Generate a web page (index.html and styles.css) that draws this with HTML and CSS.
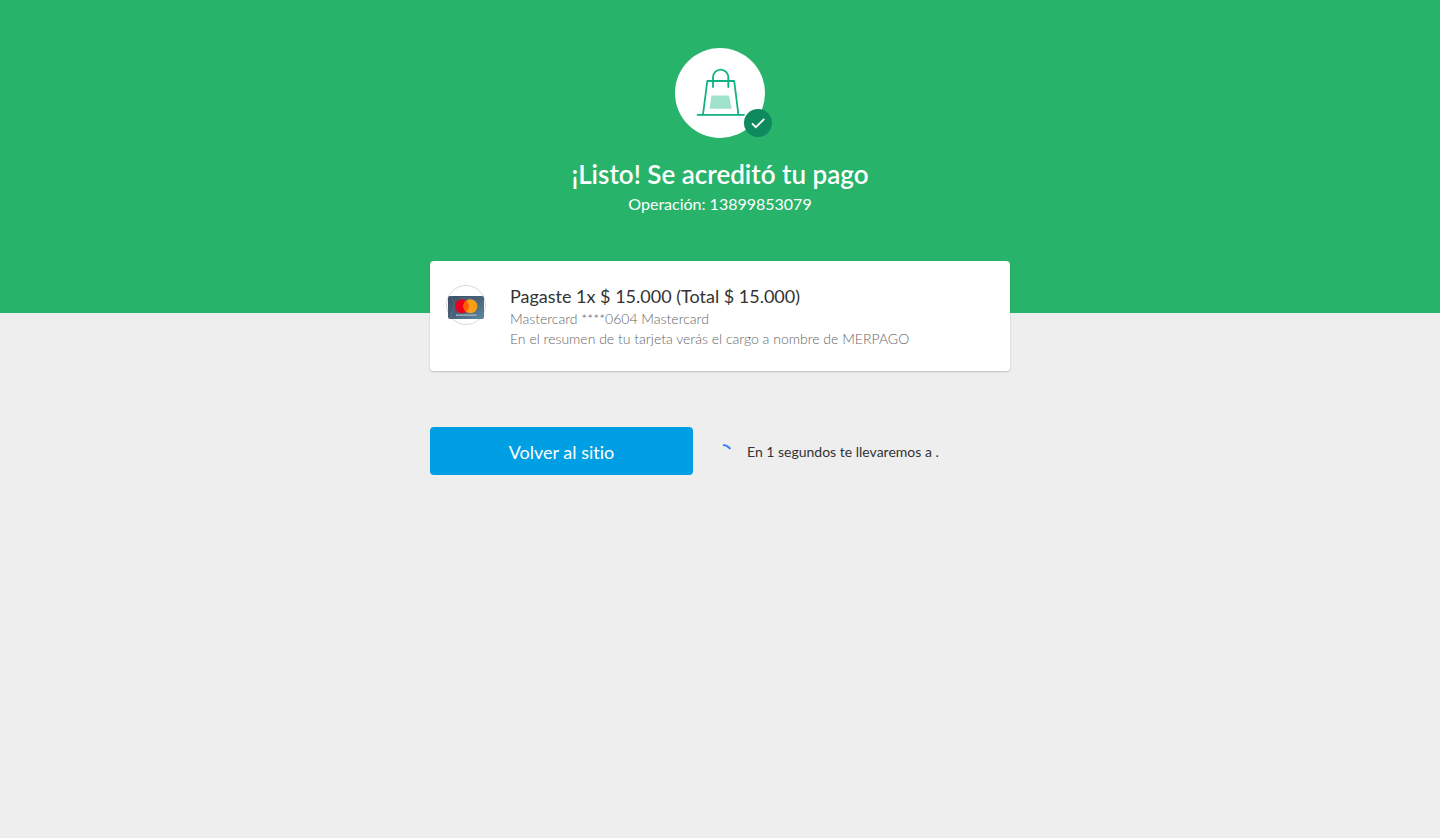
FILE: index.html
```html
<!DOCTYPE html>
<html lang="es">
<head>
<meta charset="utf-8">
<meta name="viewport" content="width=device-width, initial-scale=1">
<title>¡Listo! Se acreditó tu pago</title>
<link rel="stylesheet" href="styles.css">
</head>
<body>
<header class="hero">
  <div class="status">
    <svg class="status-bag" viewBox="0 0 90 90" fill="none" aria-hidden="true">
      <path d="M36.5 47.5h17.5l2.7 13.2H34.5z" fill="#9fe2cb"/>
      <g stroke="#12b083" stroke-width="1.8" stroke-linecap="round" stroke-linejoin="round">
        <path d="M22.500 66.800H69"/>
        <path d="M28 66.500L32.300 33h26.900L63.400 66.500"/>
        <path d="M38 39V29.200a7.600 7.600 0 0 1 15.300 0V39"/>
      </g>
    </svg>
    <svg class="status-badge" viewBox="0 0 28 28" fill="none" aria-hidden="true">
      <circle cx="14" cy="14" r="14" fill="#0f8a5f"/>
      <path d="M8 14.400l3.800 3.800L20.300 9.900" stroke="#fff" stroke-width="1.800"/>
    </svg>
  </div>
  <h1 class="hero-title">¡Listo! Se acreditó tu pago</h1>
  <p class="hero-subtitle">Operación: 13899853079</p>
</header>
<main class="content">
  <section class="card">
    <svg class="card-logo" viewBox="0 0 40 40" role="img" aria-label="Mastercard">
      <defs>
        <linearGradient id="plastic" x1="0" y1="0" x2="1" y2="1">
          <stop offset="0" stop-color="#3c5065"/>
          <stop offset=".5" stop-color="#486379"/>
          <stop offset="1" stop-color="#5e899f"/>
        </linearGradient>
      </defs>
      <circle cx="20" cy="20" r="19.500" fill="#fff" stroke="#d9d9d9"/>
      <rect x="2" y="11" width="36" height="23" rx="2" fill="url(#plastic)"/>
      <path d="M5 11l4 8-5 15" fill="none" stroke="#71879a" stroke-width=".4"/>
      <path d="M14 13.500h11" stroke="#71879a" stroke-width=".6" stroke-dasharray="2 1"/>
      <circle cx="16" cy="21.300" r="7" fill="#eb001b"/>
      <circle cx="24.400" cy="21.300" r="7" fill="#f79e1b"/>
      <path d="M20.200 15.700a7 7 0 0 1 0 11.200a7 7 0 0 1 0-11.200z" fill="#ff5f00"/>
      <path d="M10 30.200h20.500" stroke="#b9c6cf" stroke-width="1.300" stroke-dasharray="2.200 .3"/>
    </svg>
    <div class="card-body">
      <h2 class="card-title">Pagaste 1x $ 15.000 (Total $ 15.000)</h2>
      <p class="card-text">Mastercard ****0604 Mastercard</p>
      <p class="card-text">En el resumen de tu tarjeta verás el cargo a nombre de MERPAGO</p>
    </div>
  </section>
  <div class="actions">
    <button class="button" type="button">Volver al sitio</button>
    <div class="redirect" role="status">
      <svg class="spinner" viewBox="0 0 20 20" fill="none" aria-hidden="true">
        <path d="M10 3a10 10 0 0 1 7.300 4" stroke="#3483fa" stroke-width="2"/>
      </svg>
      <p class="redirect-text">En 1 segundos te llevaremos a .</p>
    </div>
  </div>
</main>
</body>
</html>
```
FILE: styles.css
```css
* {
  box-sizing: border-box;
}

body {
  margin: 0;
  background: #eee;
  color: #333;
  font-family: Lato, "Open Sans", sans-serif;
  font-variant-ligatures: none;
}

h1,
h2,
p {
  margin: 0;
}

.hero {
  padding: 48px 16px 99px;
  background: #27b46a;
  color: #fff;
  text-align: center;
}

.status {
  position: relative;
  width: 90px;
  height: 90px;
  margin: 0 auto 20px;
  border-radius: 50%;
  background: #fff;
}

.status-bag {
  display: block;
  width: 100%;
}

.status-badge {
  position: absolute;
  right: -7px;
  bottom: 1px;
  width: 28px;
}

.hero-title {
  font-size: 26px;
  font-weight: 600;
  line-height: 32px;
}

.hero-subtitle {
  margin-top: 4px;
  font-size: 16px;
  line-height: 20px;
}

.content {
  max-width: 612px;
  margin: -52px auto 0;
  padding: 0 16px;
}

.card {
  display: flex;
  align-items: flex-start;
  gap: 24px;
  padding: 24px 16px 22px;
  border-radius: 4px;
  background: #fff;
  box-shadow: 0 1px 2px rgba(0, 0, 0, 0.2);
}

.card-logo {
  flex: none;
  width: 40px;
}

.card-title {
  margin-bottom: 2px;
  font-size: 18px;
  font-weight: 400;
  line-height: 22px;
}

.card-text {
  color: #666;
  font-size: 14px;
  font-weight: 300;
  line-height: 20px;
}

.actions {
  display: flex;
  flex-wrap: wrap;
  align-items: center;
  gap: 20px;
  margin-top: 56px;
}

.button {
  flex: 0 0 263px;
  height: 48px;
  padding: 2px 16px 0;
  border: 0;
  border-radius: 4px;
  background: #009ee3;
  color: #fff;
  font-family: inherit;
  font-size: 18px;
  font-variant-ligatures: inherit;
  cursor: pointer;
}

.redirect {
  display: flex;
  align-items: center;
  gap: 14px;
  padding-top: 2px;
}

.spinner {
  width: 20px;
}

.redirect-text {
  font-size: 14px;
  line-height: 20px;
}
```
